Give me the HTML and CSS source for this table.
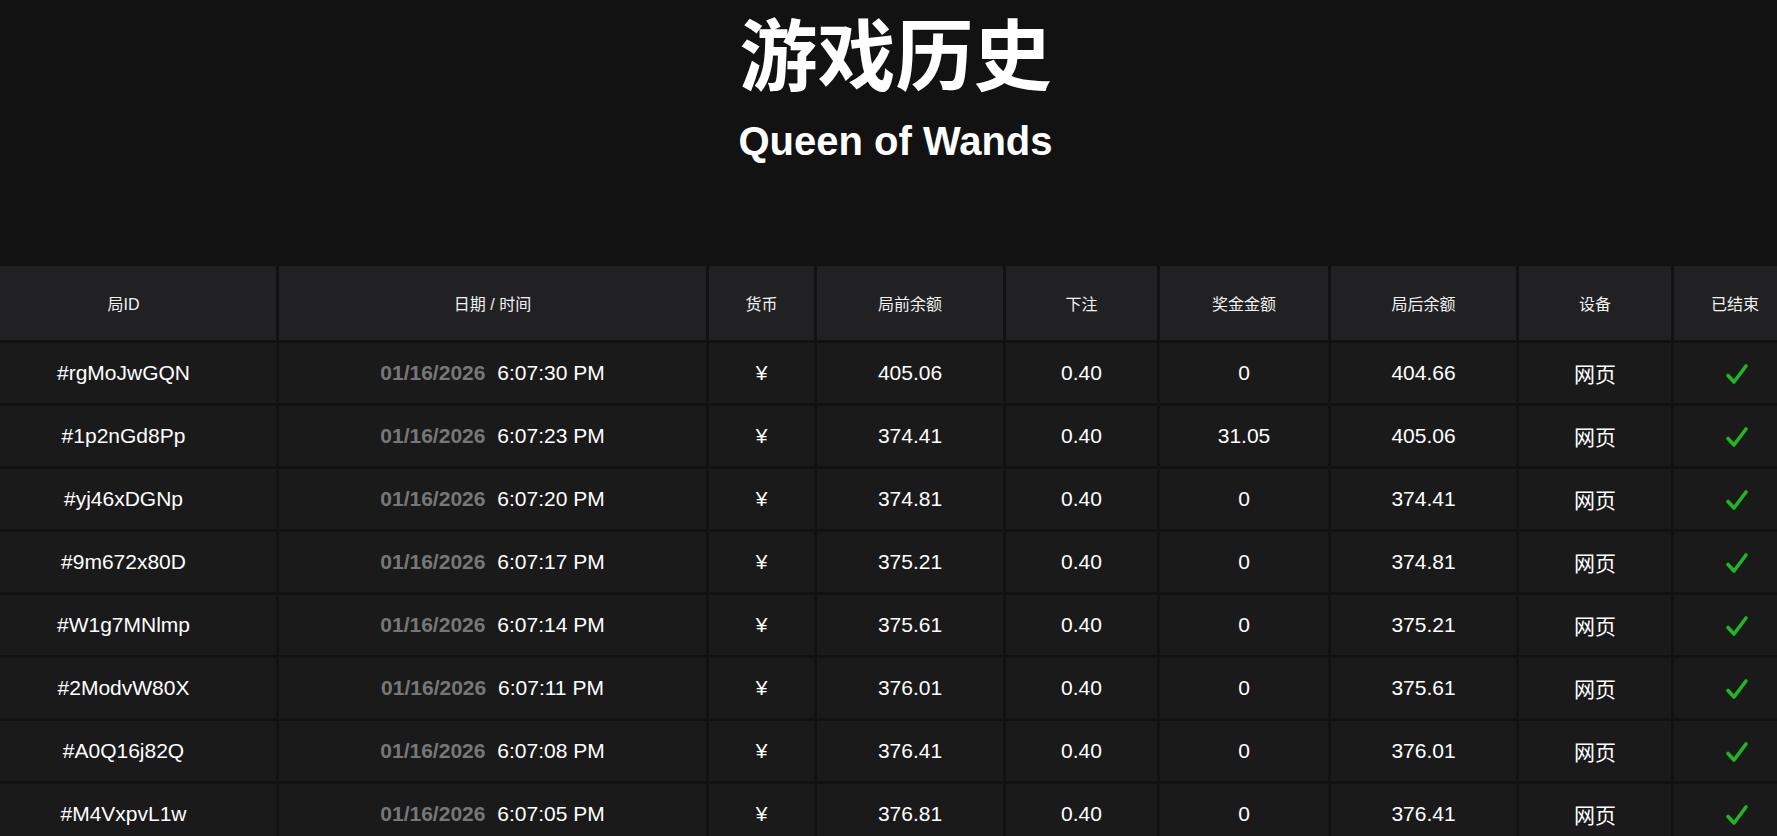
FILE: index.html
```html
<!DOCTYPE html>
<html lang="zh-CN">
<head>
<meta charset="utf-8">
<title>游戏历史</title>
<link rel="stylesheet" href="styles.css">
</head>
<body>
<div class="page">
  <header class="page-header">
    <h1 class="title">游戏历史</h1>
    <h2 class="subtitle">Queen of Wands</h2>
  </header>
  <div class="table-wrap">
    <table class="history">
      <colgroup>
        <col class="c-id"><col class="c-date"><col class="c-cur"><col class="c-before"><col class="c-bet"><col class="c-win"><col class="c-after"><col class="c-dev"><col class="c-done">
      </colgroup>
      <thead>
        <tr><th>局ID</th><th>日期 / 时间</th><th>货币</th><th>局前余额</th><th>下注</th><th>奖金金额</th><th>局后余额</th><th>设备</th><th>已结束</th></tr>
      </thead>
      <tbody>
        <tr><td>#rgMoJwGQN</td><td><span class="date">01/16/2026</span> <span class="time">6:07:30 PM</span></td><td>¥</td><td>405.06</td><td>0.40</td><td>0</td><td>404.66</td><td>网页</td><td><svg class="check" viewBox="0 0 24 22"><path d="M3 12.5 L9 19 L21 3"/></svg></td></tr>
        <tr><td>#1p2nGd8Pp</td><td><span class="date">01/16/2026</span> <span class="time">6:07:23 PM</span></td><td>¥</td><td>374.41</td><td>0.40</td><td>31.05</td><td>405.06</td><td>网页</td><td><svg class="check" viewBox="0 0 24 22"><path d="M3 12.5 L9 19 L21 3"/></svg></td></tr>
        <tr><td>#yj46xDGNp</td><td><span class="date">01/16/2026</span> <span class="time">6:07:20 PM</span></td><td>¥</td><td>374.81</td><td>0.40</td><td>0</td><td>374.41</td><td>网页</td><td><svg class="check" viewBox="0 0 24 22"><path d="M3 12.5 L9 19 L21 3"/></svg></td></tr>
        <tr><td>#9m672x80D</td><td><span class="date">01/16/2026</span> <span class="time">6:07:17 PM</span></td><td>¥</td><td>375.21</td><td>0.40</td><td>0</td><td>374.81</td><td>网页</td><td><svg class="check" viewBox="0 0 24 22"><path d="M3 12.5 L9 19 L21 3"/></svg></td></tr>
        <tr><td>#W1g7MNlmp</td><td><span class="date">01/16/2026</span> <span class="time">6:07:14 PM</span></td><td>¥</td><td>375.61</td><td>0.40</td><td>0</td><td>375.21</td><td>网页</td><td><svg class="check" viewBox="0 0 24 22"><path d="M3 12.5 L9 19 L21 3"/></svg></td></tr>
        <tr><td>#2ModvW80X</td><td><span class="date">01/16/2026</span> <span class="time">6:07:11 PM</span></td><td>¥</td><td>376.01</td><td>0.40</td><td>0</td><td>375.61</td><td>网页</td><td><svg class="check" viewBox="0 0 24 22"><path d="M3 12.5 L9 19 L21 3"/></svg></td></tr>
        <tr><td>#A0Q16j82Q</td><td><span class="date">01/16/2026</span> <span class="time">6:07:08 PM</span></td><td>¥</td><td>376.41</td><td>0.40</td><td>0</td><td>376.01</td><td>网页</td><td><svg class="check" viewBox="0 0 24 22"><path d="M3 12.5 L9 19 L21 3"/></svg></td></tr>
        <tr><td>#M4VxpvL1w</td><td><span class="date">01/16/2026</span> <span class="time">6:07:05 PM</span></td><td>¥</td><td>376.81</td><td>0.40</td><td>0</td><td>376.41</td><td>网页</td><td><svg class="check" viewBox="0 0 24 22"><path d="M3 12.5 L9 19 L21 3"/></svg></td></tr>
      </tbody>
    </table>
  </div>
</div>
</body>
</html>
```

FILE: styles.css
```css
html, body {
  margin: 0;
  padding: 0;
  background: #121212;
}
body {
  height: 100vh;
  overflow: hidden;
  color: #ffffff;
  font-family: "Liberation Sans", Arial, "Noto Sans CJK SC", sans-serif;
}
.page {
  width: 100%;
  overflow: hidden;
}
.page-header {
  text-align: center;
  padding: 6px 0 0 14px;
  height: 257px;
}
.title {
  margin: 0;
  font-family: "Noto Sans CJK SC", sans-serif;
  font-weight: 700;
  font-size: 78px;
  line-height: 90px;
  color: #ffffff;
}
.subtitle {
  margin: 21px 0 0;
  font-family: "Liberation Sans", Arial, sans-serif;
  font-weight: 700;
  font-size: 40px;
  line-height: 48px;
  color: #ffffff;
}
.table-wrap {
  width: 100%;
  overflow: hidden;
}
.history {
  border-collapse: separate;
  border-spacing: 3px;
  margin: 0 0 0 -32px;
  table-layout: fixed;
  width: 1831px;
}
.c-id { width: 305px; }
.c-date { width: 427px; }
.c-cur { width: 105px; }
.c-before { width: 186px; }
.c-bet { width: 151px; }
.c-win { width: 168px; }
.c-after { width: 185px; }
.c-dev { width: 152px; }
.c-done { width: 122px; }
.history th {
  height: 74px;
  padding: 0;
  background: #212123;
  font-family: "Liberation Sans", Arial, "Noto Sans CJK SC", sans-serif;
  font-weight: 400;
  font-size: 16px;
  color: #f2f2f2;
  text-align: center;
  vertical-align: middle;
}
.history td {
  height: 60px;
  padding: 0;
  background: #1a1a1b;
  font-size: 21px;
  color: #ffffff;
  text-align: center;
  vertical-align: middle;
  white-space: nowrap;
}
.date {
  font-weight: 700;
  color: #777777;
  margin-right: 6px;
}
.time {
  color: #ffffff;
}
.check {
  width: 24px;
  height: 22px;
  vertical-align: middle;
  margin-left: 4px;
}
.check path {
  fill: none;
  stroke: #23b423;
  stroke-width: 3.6;
  stroke-linecap: round;
  stroke-linejoin: round;
}
```
